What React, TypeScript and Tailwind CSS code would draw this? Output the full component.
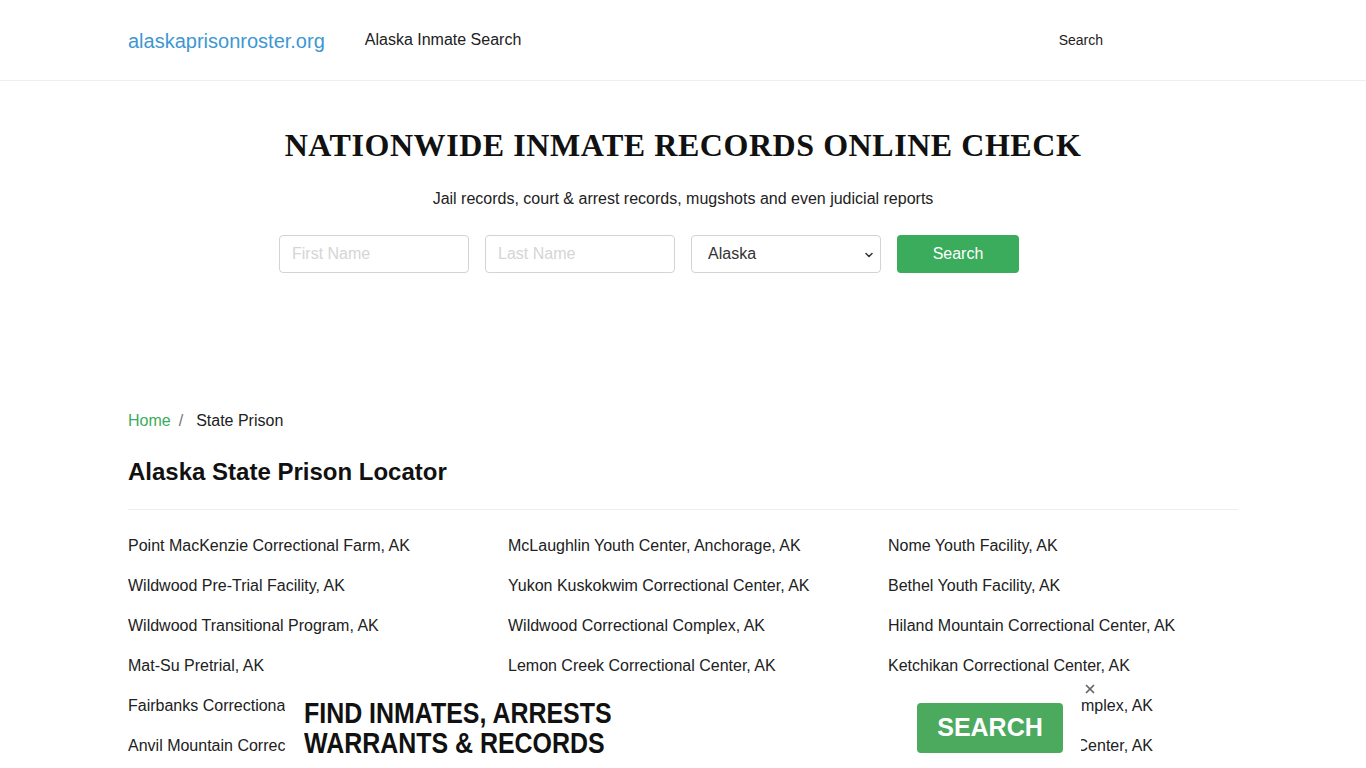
import React from 'react';
import { ChevronDown, X } from 'lucide-react';

const prisons = [
  'Point MacKenzie Correctional Farm, AK',
  'McLaughlin Youth Center, Anchorage, AK',
  'Nome Youth Facility, AK',
  'Wildwood Pre-Trial Facility, AK',
  'Yukon Kuskokwim Correctional Center, AK',
  'Bethel Youth Facility, AK',
  'Wildwood Transitional Program, AK',
  'Wildwood Correctional Complex, AK',
  'Hiland Mountain Correctional Center, AK',
  'Mat-Su Pretrial, AK',
  'Lemon Creek Correctional Center, AK',
  'Ketchikan Correctional Center, AK',
  'Fairbanks Correctional Center, AK',
  'Goose Creek Correctional Center, AK',
  'Anchorage Correctional Complex, AK',
  'Anvil Mountain Correctional Center, AK',
  'Palmer Correctional Center, AK',
  'Spring Creek Correctional Center, AK',
];

export default function App() {
  return (
    <div className="min-h-screen bg-white text-[#212529] font-['Liberation_Sans',Arial,sans-serif]">
      {/* Header */}
      <header className="h-[81px] border-b border-[#eeeeee]">
        <div className="max-w-[1140px] mx-auto px-[15px] h-full flex items-center">
          <a className="text-[20px] text-[#3d97d3] mt-[1px]">alaskaprisonroster.org</a>
          <a className="ml-10 text-[16px] text-[#212121]">Alaska Inmate Search</a>
          <a className="ml-auto mr-[135px] text-[14px] text-[#212121] mt-[1px]">Search</a>
        </div>
      </header>

      {/* Hero search */}
      <section className="pt-[45px] text-center">
        <h1 className="font-['Liberation_Serif','Times_New_Roman',serif] font-bold text-[32px] leading-[38px] tracking-[0.55px] text-[#111]">
          NATIONWIDE INMATE RECORDS ONLINE CHECK
        </h1>
        <p className="mt-[23px] text-[16px] leading-6 text-[#222]">
          Jail records, court &amp; arrest records, mugshots and even judicial reports
        </p>
        <form className="mt-[24px] mx-auto w-[808px] grid grid-cols-4 gap-4 text-left">
          <input
            placeholder="First Name"
            className="h-[38px] px-3 border border-[#ced4da] rounded-[4px] text-[16px] placeholder:text-[#d5d5d5] outline-none"
          />
          <input
            placeholder="Last Name"
            className="h-[38px] px-3 border border-[#ced4da] rounded-[4px] text-[16px] placeholder:text-[#d5d5d5] outline-none"
          />
          <div className="relative h-[38px] border border-[#ced4da] rounded-[4px] flex items-center pl-4 text-[16px] text-[#333]">
            Alaska
            <ChevronDown className="absolute right-[5px] top-[13px] w-[12px] h-[12px] text-[#333]" strokeWidth={3} />
          </div>
          <button
            type="button"
            className="w-[122px] h-[38px] bg-[#3aac5c] text-white text-[16px] rounded-[4px]"
          >
            Search
          </button>
        </form>
      </section>

      {/* Listing */}
      <main className="max-w-[1140px] mx-auto px-[15px] mt-[136px] pb-24">
        <nav className="flex items-center text-[16px] leading-6">
          <a className="text-[#3aac5c]">Home</a>
          <span className="px-2 text-[#6c757d]">/</span>
          <span className="ml-[5px] text-[#212121]">State Prison</span>
        </nav>
        <h2 className="mt-[25px] text-[24px] leading-[28px] font-bold text-[#111]">Alaska State Prison Locator</h2>
        <hr className="mt-[23px] border-t border-[#eeeeee]" />
        <ul className="mt-[24px] -mx-[15px] grid grid-cols-3 gap-y-4">
          {prisons.map((p) => (
            <li key={p} className="px-[15px] text-[16px] leading-6 text-[#212121]">
              {p}
            </li>
          ))}
        </ul>
      </main>

      {/* Sticky ad */}
      <div className="fixed bottom-0 left-[285px] w-[796px] h-[72px] bg-white flex items-center">
        <div className="ml-[19px] origin-left scale-x-[0.86] font-bold text-[29px] leading-[30px] text-[#111] -mt-[8px] whitespace-nowrap">
          <div>FIND INMATES, ARRESTS</div>
          <div>WARRANTS &amp; RECORDS</div>
        </div>
        <button
          type="button"
          className="ml-auto mr-[18px] -mt-[8px] w-[146px] h-[50px] bg-[#4caa5f] rounded-[4px] text-white font-bold text-[25px]"
        >
          SEARCH
        </button>
        <X className="absolute -right-[16px] -top-[14px] w-[14px] h-[14px] text-[#666]" strokeWidth={3} />
      </div>
    </div>
  );
}
